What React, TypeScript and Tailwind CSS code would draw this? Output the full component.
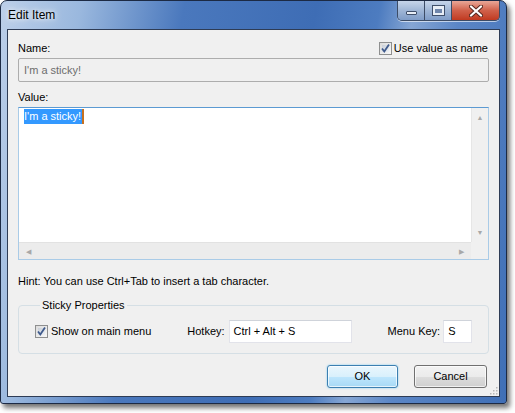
import React from 'react';

const font = { fontFamily: '"Liberation Sans", Arial, sans-serif' };

const Checkbox: React.FC = () => (
  <span className="inline-flex w-[13px] h-[13px] shrink-0 items-center justify-center border border-[#8e8f8f] bg-gradient-to-br from-[#dcdcdc] to-[#f7f7f7] relative">
    <span className="absolute inset-[2px] bg-gradient-to-br from-[#c9cfd8] to-[#eef1f5]" />
    <svg width="11" height="11" viewBox="0 0 11 11" className="relative">
      <path d="M2 5.5 L4.3 8.5 L9 1.5" fill="none" stroke="#3f5a8c" strokeWidth="1.8" />
    </svg>
  </span>
);

const CaptionButtons: React.FC = () => (
  <div className="absolute top-0 right-[6px] flex h-[20px] rounded-b-[5px] border border-t-0 border-[#3c4c66] overflow-hidden shadow-[0_1px_0_rgba(255,255,255,0.6)]">
    <div className="w-[27px] flex items-center justify-center bg-gradient-to-b from-[#c6d5ea] via-[#9fb6d6] to-[#7f9cc7] border-r border-[#3c4c66]">
      <span className="w-[11px] h-[4px] mt-[5px] bg-[#e8eef6] border border-[#3f4f6a] rounded-[1px]" />
    </div>
    <div className="w-[27px] flex items-center justify-center bg-gradient-to-b from-[#c6d5ea] via-[#9fb6d6] to-[#7f9cc7] border-r border-[#3c4c66]">
      <span className="w-[11px] h-[9px] -mt-[1px] border-[2px] border-t-[3px] border-[#e8eef6] outline outline-1 outline-[#3f4f6a] bg-[#6f86ab]" />
    </div>
    <div className="w-[47px] flex items-center justify-center bg-gradient-to-b from-[#e8a798] via-[#d0604a] to-[#c0391f]">
      <svg width="14" height="12" viewBox="0 0 14 12">
        <path d="M2 1.5 L12 10.5 M12 1.5 L2 10.5" stroke="#5a2a22" strokeWidth="4.2" strokeLinecap="round" />
        <path d="M2 1.5 L12 10.5 M12 1.5 L2 10.5" stroke="#ffffff" strokeWidth="2.2" strokeLinecap="round" />
      </svg>
    </div>
  </div>
);

const VScroll: React.FC = () => (
  <div className="w-[17px] bg-[#f0f0f0] flex flex-col justify-between items-center py-[6px] border-l border-[#e6e6e6]">
    <span className="text-[7px] leading-none text-[#a8a8a8]">▲</span>
    <span className="text-[7px] leading-none text-[#a8a8a8]">▼</span>
  </div>
);

const HScroll: React.FC = () => (
  <div className="h-[17px] flex">
    <div className="flex-1 bg-[#ececec] border-t border-[#e2e2e2] flex items-center justify-between px-[7px]">
      <span className="text-[7px] leading-none text-[#a8a8a8]">◀</span>
      <span className="text-[7px] leading-none text-[#a8a8a8]">▶</span>
    </div>
    <div className="w-[17px] bg-[#f0f0f0]" />
  </div>
);

const App: React.FC = () => {
  return (
    <div className="w-[515px] h-[413px] bg-white relative" style={font}>
      {/* Window frame */}
      <div className="w-[507px] h-[404px] rounded-t-[7px] rounded-b-[3px] border border-[#1c2a44] shadow-[3px_4px_5px_rgba(0,0,0,0.55)] bg-[linear-gradient(100deg,#bccfe9_0%,#9ab8de_14%,#4a78bd_32%,#3e6db5_55%,#4d7cc0_66%,#86a6d4_72%,#5b86c6_80%,#3f6fb6_100%)] relative flex flex-col">
        {/* Title bar */}
        <div className="h-[28px] flex items-center pl-[7px] pb-[1px]">
          <span className="text-[12px] text-black [text-shadow:0_0_8px_rgba(255,255,255,0.9),0_0_4px_rgba(255,255,255,0.9)]">Edit Item</span>
        </div>
        <CaptionButtons />

        {/* Client */}
        <div className="mx-[6px] mb-[6px] flex-1 border border-[#2e3c55] bg-[#f0f0f0] text-[11px] text-black px-[10px] pt-[10px] flex flex-col relative whitespace-nowrap">
          <div className="h-[16px] flex items-center justify-between">
            <span>Name:</span>
            <label className="flex items-center gap-[2px] pr-[1px]">
              <Checkbox />
              <span>Use value as name</span>
            </label>
          </div>
          <div className="mt-[2px] h-[24px] border border-[#adadad] rounded-[2px] bg-[#f0f0f0] flex items-center px-[5px] text-[#6d6d6d]">
            I'm a sticky!
          </div>

          <div className="mt-[8px] h-[15px] flex items-center">Value:</div>
          <div className="mt-[2px] h-[153px] border border-[#a9cbe7] border-t-[#5c9ad2] bg-white flex flex-col">
            <div className="flex-1 flex">
              <div className="flex-1 px-[5px]">
                <span className="bg-[#3399ff] text-white leading-[15px] inline-block pr-[1px] border-r-2 border-[#c8701f]">
                  I'm a sticky!
                </span>
              </div>
              <VScroll />
            </div>
            <HScroll />
          </div>

          <div className="mt-[14px] h-[14px] flex items-center">Hint: You can use Ctrl+Tab to insert a tab character.</div>

          <fieldset className="mt-[10px] border border-[#d5dfe5] rounded-[4px] h-[56px] pl-[16px] pr-[4px]">
            <legend className="ml-[5px] px-[2px] leading-[14px]">Sticky Properties</legend>
            <div className="flex items-center mt-[8px]">
              <label className="flex items-center gap-[3px] shrink-0">
                <Checkbox />
                <span>Show on main menu</span>
              </label>
              <span className="ml-[36px] shrink-0">Hotkey:</span>
              <div className="ml-[4px] w-[123px] h-[23px] shrink-0 bg-white border border-[#e2e3ea] border-t-[#cfd3da] flex items-center px-[4px]">Ctrl + Alt + S</div>
              <span className="ml-[36px] shrink-0">Menu Key:</span>
              <div className="ml-[3px] w-[29px] h-[23px] shrink-0 bg-white border border-[#e2e3ea] border-t-[#cfd3da] flex items-center px-[4px]">S</div>
            </div>
          </fieldset>

          <div className="mt-[11px] flex justify-end gap-[16px] pr-[2px]">
            <button className="w-[71px] h-[23px] rounded-[3px] border border-[#3c7fb1] bg-[linear-gradient(#eaf6fd_0%,#d9f0fc_50%,#bee6fd_51%,#a7d9f5_100%)] shadow-[inset_0_0_0_1px_rgba(255,255,255,0.7),0_0_2px_#6fc8f3] text-[11px]">OK</button>
            <button className="w-[73px] h-[23px] rounded-[3px] border border-[#707070] bg-[linear-gradient(#f2f2f2_0%,#ebebeb_50%,#dddddd_51%,#cfcfcf_100%)] shadow-[inset_0_0_0_1px_rgba(255,255,255,0.7)] text-[11px]">Cancel</button>
          </div>

          {/* size grip */}
          <svg width="10" height="10" viewBox="0 0 10 10" className="absolute right-[1px] bottom-[1px]">
            {[[8, 2], [8, 5], [5, 5], [8, 8], [5, 8], [2, 8]].map(([x, y], i) => (
              <rect key={i} x={x} y={y} width="1.5" height="1.5" fill="#b8b8b8" />
            ))}
          </svg>
        </div>
      </div>
    </div>
  );
};

export default App;
